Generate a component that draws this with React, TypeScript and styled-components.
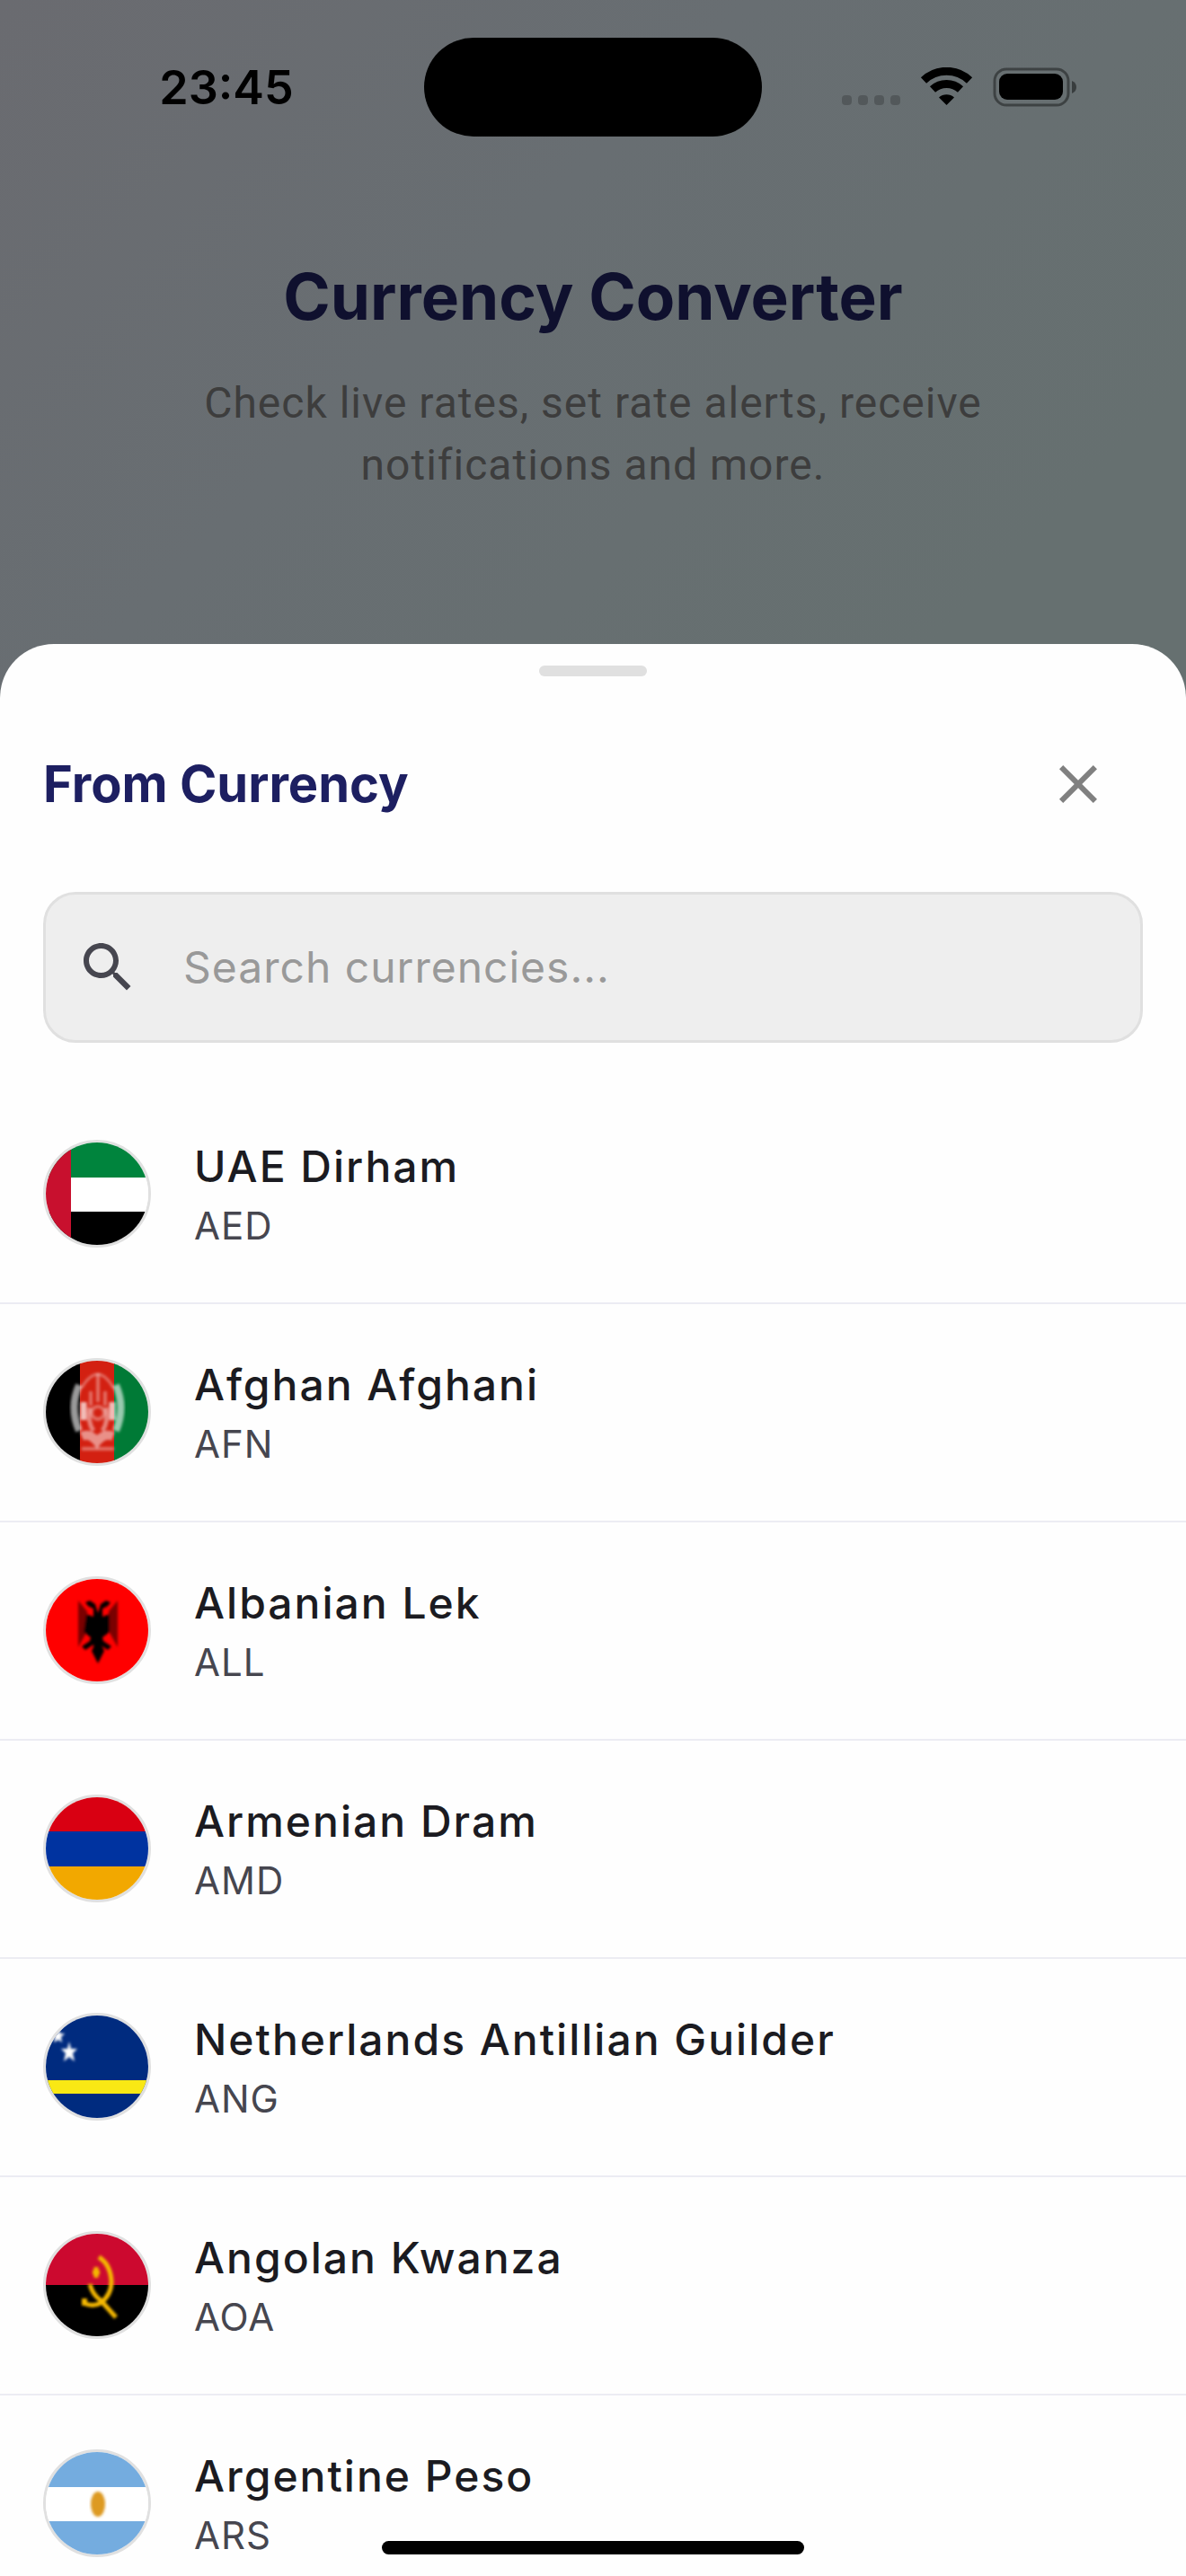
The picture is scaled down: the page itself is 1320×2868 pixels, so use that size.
import React, { useState } from "react";
import styled, { createGlobalStyle } from "styled-components";

const colors = {
  navy: "#1d1f61",
  ink: "#1b1b21",
  muted: "#46464f",
  hairline: "#ececf3",
  outline: "#e0e0e0",
  field: "#eeeeee",
};

const GlobalStyle = createGlobalStyle`
  * { box-sizing: border-box; }
  body {
    margin: 0;
    font-family: Inter, "Noto Sans", sans-serif;
    -webkit-font-smoothing: antialiased;
  }
  h1, h2, p, ul { margin: 0; padding: 0; }
  button, input { font: inherit; border: 0; background: none; padding: 0; }
`;

const Screen = styled.div`
  height: 100vh;
  display: flex;
  flex-direction: column;
  overflow: hidden;
  background: linear-gradient(135deg, #6a6b70 0%, #686e72 20%, #667070 42%, #667070 100%);
`;

const StatusBar = styled.div`
  display: grid;
  grid-template-columns: 1fr auto 1fr;
  align-items: center;
  padding-top: 42px;
  color: #000;
`;

const Clock = styled.time`
  padding: 2px 0 0 32px;
  text-align: center;
  font-size: 52px;
  line-height: 60px;
  font-weight: 600;
`;

const Island = styled.div`
  width: 376px;
  height: 110px;
  border-radius: 55px;
  background: #000;
`;

const StatusIcons = styled.div`
  display: flex;
  align-items: center;
  justify-content: center;
  padding-right: 32px;
`;

const Intro = styled.header`
  display: flex;
  flex-direction: column;
  align-items: center;
  gap: 40px;
  height: 565px;
  padding: 134px 200px 0;
  text-align: center;
`;

const PageTitle = styled.h1`
  color: #0f102e;
  font-size: 71px;
  line-height: 88px;
  font-weight: 700;
`;

const Tagline = styled.p`
  color: #3d3d3d;
  font-family: Roboto, sans-serif;
  font-size: 48px;
  line-height: 69px;
  letter-spacing: 1px;
`;

const Sheet = styled.section`
  flex: 1;
  min-height: 0;
  display: flex;
  flex-direction: column;
  overflow: hidden;
  border-radius: 60px 60px 0 0;
  background: #fefefe;
`;

const Handle = styled.div`
  flex: none;
  width: 120px;
  height: 12px;
  margin: 24px auto 0;
  border-radius: 6px;
  background: ${colors.outline};
`;

const SheetHeader = styled.div`
  flex: none;
  display: flex;
  align-items: center;
  justify-content: space-between;
  padding: 48px 48px 0;
`;

const SheetTitle = styled.h2`
  color: ${colors.navy};
  font-size: 56px;
  line-height: 72px;
  font-weight: 700;
`;

const CloseButton = styled.button`
  display: grid;
  place-items: center;
  width: 144px;
  height: 144px;
  color: #808080;
  cursor: pointer;
`;

const SearchBox = styled.label`
  flex: none;
  display: flex;
  align-items: center;
  gap: 48px;
  height: 168px;
  margin: 48px 48px 0;
  padding: 0 33px;
  border: 3px solid ${colors.outline};
  border-radius: 36px;
  background: ${colors.field};
  color: ${colors.muted};
`;

const SearchInput = styled.input`
  flex: 1;
  min-width: 0;
  color: ${colors.ink};
  font-size: 48px;
  line-height: 72px;
  letter-spacing: 1px;
  outline: none;
  &::placeholder { color: #999999; opacity: 1; }
`;

const List = styled.ul`
  list-style: none;
  padding-top: 48px;
`;

const Row = styled.button`
  display: flex;
  align-items: center;
  gap: 48px;
  width: 100%;
  height: 243px;
  padding: 60px 48px 61px;
  border-bottom: 2px solid ${colors.hairline};
  text-align: left;
  cursor: pointer;
`;

const FlagRing = styled.span`
  flex: none;
  width: 120px;
  height: 120px;
  border: 3px solid ${colors.outline};
  border-radius: 50%;
  overflow: hidden;
  background: #fff;
  svg { display: block; width: 100%; height: 100%; }
`;

const Labels = styled.span`
  display: flex;
  flex-direction: column;
`;

const Name = styled.span`
  color: ${colors.ink};
  font-size: 48px;
  line-height: 72px;
  font-weight: 500;
  letter-spacing: 2px;
`;

const Code = styled.span`
  color: ${colors.muted};
  font-size: 42px;
  line-height: 60px;
  letter-spacing: 1px;
`;

const HomeIndicator = styled.div`
  position: fixed;
  left: 50%;
  bottom: 24px;
  width: 470px;
  height: 15px;
  margin-left: -235px;
  border-radius: 8px;
  background: #000;
`;

const flags: Record<string, React.ReactNode> = {
  AED: (
    <>
      <rect width="114" height="39" fill="#00843d" />
      <rect y="39" width="114" height="38" fill="#fff" />
      <rect y="77" width="114" height="37" fill="#000" />
      <rect width="28" height="114" fill="#c8102e" />
    </>
  ),
  AFN: (
    <>
      <rect width="39" height="114" fill="#000" />
      <rect x="38" width="39" height="114" fill="#d32011" />
      <rect x="76" width="38" height="114" fill="#007a36" />
      <g fill="none" stroke="#fff" filter="url(#soft-AFN)">
        <path d="M37 27Q26 52 37 78M78 27Q89 52 78 78" strokeWidth="8" opacity=".6" />
        <path d="M40 30Q58 0 75 30" strokeWidth="3" opacity=".35" />
        <path d="M58 14v16M50 34v16M58 30v16M66 34v16" strokeWidth="4" opacity=".35" />
        <path d="M42 46v20M74 46v20" strokeWidth="7" opacity=".7" />
        <path d="M49 52q-3 16 4 26M67 52q3 16-4 26" strokeWidth="5" opacity=".45" />
        <circle cx="58" cy="58" r="7" strokeWidth="4" opacity=".35" />
        <path d="M40 84q9-4 17 6q8-10 18-6" strokeWidth="10" opacity=".5" />
        <path d="M40 98h36" strokeWidth="4" opacity=".35" />
      </g>
    </>
  ),
  ALL: (
    <>
      <rect width="114" height="114" fill="#ff0000" />
      <g filter="url(#soft-ALL)">
        <path
          d="M36 24L46 36V58L36 76zM80 24L70 36V58L80 76z"
          fill="#7a0000"
        />
        <path
          d="M45 39l8 3V33l-6-3-3-4 5-2 6 4 3 10 3-10 6-4 5 2-3 4-6 3v9l8-3v20l-8 6 1 4 9 6-4 4-9-6-2 10-1 9-2-9-2-10-9 6-4-4 9-6 1-4-8-6z"
          fill="#000"
        />
        <path d="M58 66l7 14-7 14-7-14z" fill="#000" />
      </g>
    </>
  ),
  AMD: (
    <>
      <rect width="114" height="39" fill="#d90012" />
      <rect y="38" width="114" height="39" fill="#0033a0" />
      <rect y="77" width="114" height="37" fill="#f2a800" />
    </>
  ),
  ANG: (
    <>
      <rect width="114" height="114" fill="#002b7f" />
      <rect y="72" width="114" height="15" fill="#f9e814" />
      <g fill="#fff" filter="url(#soft-ANG)">
        <path d="M26 29l2 8h7l-5 5 2 9-6-5-6 5 2-9-5-5h7z" />
        <path d="M14 14l2 6h5l-4 4 1 6-4-3-5 3 1-6-4-4h6z" />
      </g>
    </>
  ),
  AOA: (
    <>
      <rect width="114" height="58" fill="#cc092f" />
      <rect y="57" width="114" height="57" fill="#000" />
      <g fill="none" stroke="#f5b800" filter="url(#soft-AOA)">
        <path d="M59 26Q72 34 73 53Q73 68 61 77Q52 82 42 77" strokeWidth="5" />
        <path d="M49 56Q52 68 61 74L78 93" strokeWidth="5" />
        <path d="M43 72v8" strokeWidth="6" />
        <path d="M56 37v12M52 43h8" strokeWidth="5" />
      </g>
    </>
  ),
  ARS: (
    <>
      <rect width="114" height="39" fill="#74acdf" />
      <rect y="39" width="114" height="38" fill="#fff" />
      <rect y="77" width="114" height="37" fill="#74acdf" />
      <ellipse cx="58" cy="58" rx="8" ry="14" fill="#dd9a22" filter="url(#soft-ARS)" />
    </>
  ),
};

const currencies = [
  { code: "AED", name: "UAE Dirham" },
  { code: "AFN", name: "Afghan Afghani" },
  { code: "ALL", name: "Albanian Lek" },
  { code: "AMD", name: "Armenian Dram" },
  { code: "ANG", name: "Netherlands Antillian Guilder" },
  { code: "AOA", name: "Angolan Kwanza" },
  { code: "ARS", name: "Argentine Peso" },
];

function SignalGlyphs() {
  return (
    <svg width="262" height="44" viewBox="0 0 262 44" aria-hidden="true">
      {[0, 18, 36, 54].map((x) => (
        <rect key={x} x={x} y="31" width="11" height="11" rx="4" fill="#000" opacity=".2" />
      ))}
      <g fill="none" stroke="#000" strokeWidth="9">
        <path d="M91 14.500A37 37 0 0 1 142 14.500" />
        <path d="M101 24.500A23 23 0 0 1 132 24.500" />
      </g>
      <path d="M108 33.500A13 13 0 0 1 125 33.500L116.500 42z" fill="#000" />
      <rect x="170" y="2" width="82" height="40" rx="13" fill="none" stroke="#000" strokeWidth="3" opacity=".4" />
      <rect x="175" y="7" width="71" height="29" rx="9" fill="#000" />
      <path d="M256 15q5 2 5 7t-5 7z" fill="#000" opacity=".45" />
    </svg>
  );
}

export default function App() {
  const [query, setQuery] = useState("");
  const shown = currencies.filter((c) =>
    (c.name + " " + c.code).toLowerCase().includes(query.toLowerCase())
  );

  return (
    <Screen>
      <GlobalStyle />
      <StatusBar>
        <Clock>23:45</Clock>
        <Island />
        <StatusIcons>
          <SignalGlyphs />
        </StatusIcons>
      </StatusBar>
      <Intro>
        <PageTitle>Currency Converter</PageTitle>
        <Tagline>Check live rates, set rate alerts, receive notifications and more.</Tagline>
      </Intro>
      <Sheet aria-labelledby="sheet-title">
        <Handle />
        <SheetHeader>
          <SheetTitle id="sheet-title">From Currency</SheetTitle>
          <CloseButton type="button" aria-label="Close">
            <svg width="72" height="72" viewBox="0 0 24 24" fill="currentColor" aria-hidden="true">
              <path d="M19 6.410 17.590 5 12 10.590 6.410 5 5 6.410 10.590 12 5 17.590 6.410 19 12 13.410 17.590 19 19 17.590 13.410 12z" />
            </svg>
          </CloseButton>
        </SheetHeader>
        <SearchBox>
          <svg width="72" height="72" viewBox="0 0 24 24" fill="currentColor" aria-hidden="true">
            <path d="M15.500 14h-.79l-.28-.27C15.410 12.590 16 11.110 16 9.500 16 5.910 13.090 3 9.500 3S3 5.910 3 9.500 5.910 16 9.500 16c1.610 0 3.090-.59 4.230-1.570l.27.28v.79l5 4.990L20.490 19l-4.990-5zm-6 0C7.010 14 5 11.990 5 9.500S7.010 5 9.500 5 14 7.010 14 9.500 11.990 14 9.500 14z" />
          </svg>
          <SearchInput
            type="text"
            aria-label="Search currencies"
            placeholder="Search currencies..."
            value={query}
            onChange={(e) => setQuery(e.target.value)}
          />
        </SearchBox>
        <List>
          {shown.map((c) => (
            <li key={c.code}>
              <Row type="button">
                <FlagRing>
                  <svg viewBox="0 0 114 114" aria-hidden="true">
                    <defs>
                      <filter id={"soft-" + c.code}>
                        <feGaussianBlur stdDeviation="1.500" />
                      </filter>
                    </defs>
                    {flags[c.code]}
                  </svg>
                </FlagRing>
                <Labels>
                  <Name>{c.name}</Name>
                  <Code>{c.code}</Code>
                </Labels>
              </Row>
            </li>
          ))}
        </List>
      </Sheet>
      <HomeIndicator />
    </Screen>
  );
}
